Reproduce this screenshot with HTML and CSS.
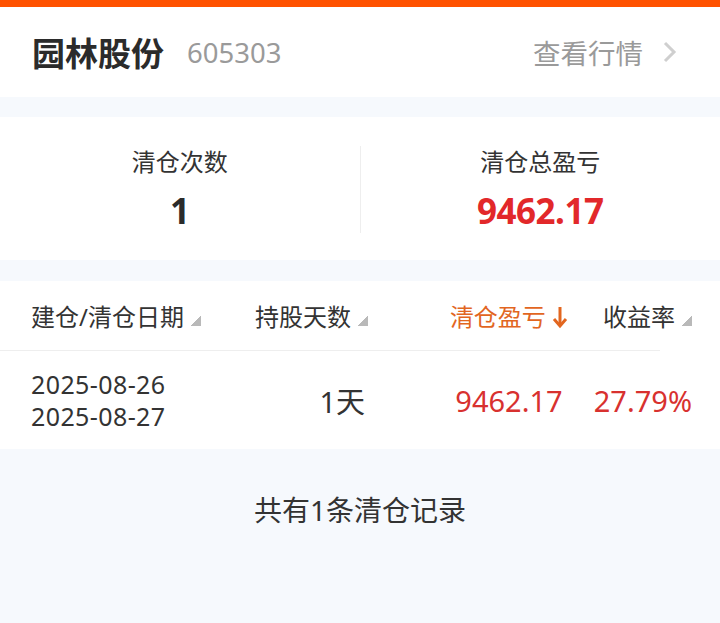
FILE: index.html
```html
<!DOCTYPE html>
<html lang="zh-CN">

<head>
    <meta charset="UTF-8">
    <meta name="viewport" content="width=device-width, initial-scale=1.0">
    <title>清仓记录</title>
    <link rel="stylesheet" href="styles.css">
</head>

<body>
    <div class="topbar"></div>

    <div class="stock-head">
        <div class="stock-name">
            <h1>园林股份</h1>
            <span class="code">605303</span>
        </div>
        <a class="quote-link" href="#">
            查看行情
            <svg class="chevron" width="14" height="22" viewBox="0 0 14 22">
                <polyline points="2,2 11,11 2,20" fill="none" stroke="#cfcfcf" stroke-width="3" />
            </svg>
        </a>
    </div>

    <div class="summary">
        <div class="stat">
            <div class="stat-label">清仓次数</div>
            <div class="stat-value">1</div>
        </div>
        <div class="stat">
            <div class="stat-label">清仓总盈亏</div>
            <div class="stat-value red">9462.17</div>
        </div>
    </div>

    <div class="records">
        <div class="row head">
            <div class="cell c-date">建仓/清仓日期<span class="sort"></span></div>
            <div class="cell c-days">持股天数<span class="sort"></span></div>
            <div class="cell c-pnl active">清仓盈亏
                <svg class="arrow" width="16" height="24" viewBox="0 0 16 24">
                    <line x1="8" y1="2" x2="8" y2="21" stroke="#e2661f" stroke-width="3" />
                    <polyline points="2,14 8,21 14,14" fill="none" stroke="#e2661f" stroke-width="3" />
                </svg>
            </div>
            <div class="cell c-rate">收益率<span class="sort"></span></div>
        </div>
        <div class="row body">
            <div class="cell c-date">
                <div>2025-08-26</div>
                <div>2025-08-27</div>
            </div>
            <div class="cell c-days">1天</div>
            <div class="cell c-pnl red">9462.17</div>
            <div class="cell c-rate red">27.79%</div>
        </div>
    </div>

    <div class="footer-note">共有1条清仓记录</div>
</body>

</html>
```

FILE: styles.css
```css
body {
    margin: 0;
    padding: 0;
    background-color: #f6f9fd;
    color: #333;
    font-family: "Noto Sans", "Noto Sans CJK SC", sans-serif;
}

.topbar {
    height: 7px;
    background-color: #ff5200;
}

.stock-head {
    height: 90px;
    background-color: white;
    display: flex;
    align-items: center;
    justify-content: space-between;
    padding: 0 43px 0 32px;
    margin-bottom: 20px;
}

.stock-name {
    display: flex;
    align-items: center;
    gap: 23px;
}

.stock-name h1 {
    margin: 0;
    font-size: 33px;
    font-weight: 700;
    color: #2b2b2b;
}

.stock-name .code {
    font-size: 27.5px;
    color: #9a9a9a;
}

.quote-link {
    display: flex;
    align-items: center;
    gap: 20px;
    font-size: 27.5px;
    color: #9a9a9a;
    text-decoration: none;
}

.summary {
    background-color: white;
    display: flex;
    padding: 29px 0 27px;
    margin-bottom: 21px;
}

.stat {
    flex: 1;
    text-align: center;
}

.stat + .stat {
    border-left: 1px solid #eeeeee;
}

.stat-label {
    font-size: 24px;
    line-height: 32px;
    color: #333;
}

.stat-value {
    margin-top: 11px;
    font-size: 35px;
    line-height: 44px;
    font-weight: 700;
    letter-spacing: -0.5px;
    color: #2b2b2b;
}

.red {
    color: #d8312f;
}

.stat-value.red {
    color: #e2282a;
}

.records {
    background-color: white;
}

.row {
    display: grid;
    grid-template-columns: 190px 144px 223px 104px;
    align-items: center;
    padding-left: 31px;
}

.row.head {
    height: 69px;
    font-size: 24px;
    color: #333;
    border-bottom: 1px solid #eeeeee;
    width: 629px;
}

.row.body {
    height: 98px;
}

.cell {
    white-space: nowrap;
}

.c-days,
.c-rate {
    text-align: right;
}

.head .c-days {
    margin-right: -3px;
}

.c-pnl {
    padding-left: 65px;
    text-align: center;
}

.head .active {
    color: #e2661f;
}

.arrow {
    vertical-align: -3px;
}

.sort {
    display: inline-block;
    width: 11px;
    height: 10px;
    margin-left: 6px;
    background: linear-gradient(to bottom right, transparent 50%, #b9b9b9 50%);
}

.body .c-date {
    font-size: 25px;
    line-height: 32px;
    letter-spacing: 0.4px;
}

.body .c-days,
.body .c-pnl,
.body .c-rate {
    font-size: 29px;
}

.footer-note {
    padding-top: 45px;
    text-align: center;
    font-size: 28px;
    line-height: 32px;
    color: #333;
}
```
